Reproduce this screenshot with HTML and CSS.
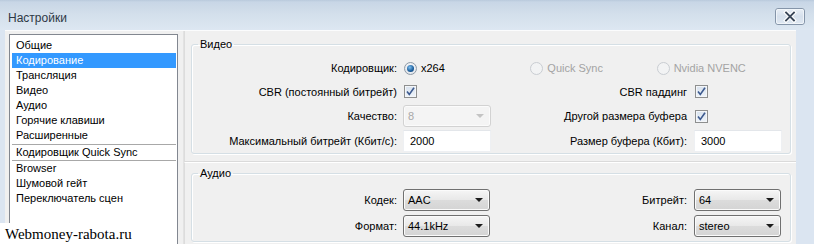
FILE: index.html
```html
<!DOCTYPE html>
<html lang="ru">
<head>
<meta charset="utf-8">
<title>Настройки</title>
<link rel="stylesheet" href="styles.css">
</head>
<body>
<div class="window">
  <div class="titlebar">
    <span class="title">Настройки</span>
    <span class="close-btn">
      <svg width="30" height="17" viewBox="0 0 30 17">
        <defs>
          <linearGradient id="cbg" x1="0" y1="0" x2="0" y2="1">
            <stop offset="0" stop-color="#e9eff6"/>
            <stop offset="0.5" stop-color="#d6e0ec"/>
            <stop offset="1" stop-color="#dfe8f2"/>
          </linearGradient>
        </defs>
        <rect x="0.5" y="0.5" width="29" height="16" rx="2.5" fill="url(#cbg)" stroke="#8595a9"/>
        <rect x="1.5" y="1.5" width="27" height="14" rx="1.5" fill="none" stroke="#f4f7fb" stroke-opacity="0.8"/>
        <path d="M11 4.5 L19 12.5 M19 4.5 L11 12.5" stroke="#ffffff" stroke-width="4" stroke-linecap="square"/>
        <path d="M11 4.5 L19 12.5 M19 4.5 L11 12.5" stroke="#3a4759" stroke-width="1.8" stroke-linecap="square"/>
      </svg>
    </span>
  </div>
  <div class="body">
    <ul class="listbox">
      <li class="item">Общие</li>
      <li class="item selected">Кодирование</li>
      <li class="item">Трансляция</li>
      <li class="item">Видео</li>
      <li class="item">Аудио</li>
      <li class="item">Горячие клавиши</li>
      <li class="item">Расширенные</li>
      <li class="item separated">Кодировщик Quick Sync</li>
      <li class="item">Browser</li>
      <li class="item">Шумовой гейт</li>
      <li class="item">Переключатель сцен</li>
    </ul>
    <div class="content">
      <div class="panel panel-video">
        <fieldset class="group">
          <legend class="group-title">Видео</legend>
          <div class="grid grid-video">
            <span class="label">Кодировщик:</span>
            <div class="radios">
              <span class="radio-item"><span class="radio checked"></span><span>x264</span></span>
              <span class="radio-item disabled"><span class="radio"></span><span>Quick Sync</span></span>
              <span class="radio-item disabled"><span class="radio"></span><span>Nvidia NVENC</span></span>
            </div>

            <span class="label">CBR (постоянный битрейт)</span>
            <span class="cell"><span class="checkbox"><svg width="11" height="11" viewBox="0 0 11 11"><path d="M2 5.5 L4.3 8.5 L9 1.8" fill="none" stroke="#3d5a8f" stroke-width="1.6"/></svg></span></span>
            <span class="label label-right">CBR паддинг</span>
            <span class="cell"><span class="checkbox"><svg width="11" height="11" viewBox="0 0 11 11"><path d="M2 5.5 L4.3 8.5 L9 1.8" fill="none" stroke="#3d5a8f" stroke-width="1.6"/></svg></span></span>

            <span class="label">Качество:</span>
            <span class="combo disabled"><span class="combo-text">8</span><span class="arrow"></span></span>
            <span class="label label-right">Другой размера буфера</span>
            <span class="cell"><span class="checkbox"><svg width="11" height="11" viewBox="0 0 11 11"><path d="M2 5.5 L4.3 8.5 L9 1.8" fill="none" stroke="#3d5a8f" stroke-width="1.6"/></svg></span></span>

            <span class="label">Максимальный битрейт (Кбит/с):</span>
            <span class="input">2000</span>
            <span class="label label-right">Размер буфера (Кбит):</span>
            <span class="input">3000</span>
          </div>
        </fieldset>
      </div>
      <div class="panel panel-audio">
        <fieldset class="group">
          <legend class="group-title">Аудио</legend>
          <div class="grid grid-audio">
            <span class="label">Кодек:</span>
            <span class="combo"><span class="combo-text">AAC</span><span class="arrow"></span></span>
            <span class="label label-right">Битрейт:</span>
            <span class="combo"><span class="combo-text">64</span><span class="arrow"></span></span>

            <span class="label">Формат:</span>
            <span class="combo"><span class="combo-text">44.1kHz</span><span class="arrow"></span></span>
            <span class="label label-right">Канал:</span>
            <span class="combo"><span class="combo-text">stereo</span><span class="arrow"></span></span>
          </div>
        </fieldset>
      </div>
    </div>
  </div>
  <div class="watermark">Webmoney-rabota.ru</div>
</div>
</body>
</html>
```

FILE: styles.css
```css
* { box-sizing: border-box; }
html, body { margin: 0; padding: 0; }
body {
  width: 814px;
  height: 244px;
  overflow: hidden;
  font-family: "Liberation Sans", Arial, sans-serif;
  font-size: 11px;
  color: #000;
  background: #dce6f2;
}
.window {
  position: relative;
  width: 814px;
  height: 244px;
  background: #dbe5f1;
  overflow: hidden;
}
.titlebar {
  height: 30px;
  display: flex;
  align-items: center;
  padding-left: 8px;
  padding-right: 9px;
  background: linear-gradient(#b9c9dc 0px, #c8d6e6 2px, #d3dfeb 14px, #dde7f2 30px);
}
.title {
  font-size: 12px;
  color: #2e3845;
  margin-top: 5px;
}
.close-btn {
  margin-left: auto;
  display: flex;
  margin-top: 3px;
}
.body {
  display: flex;
  height: 214px;
  margin-left: 5px;
  width: 791px;
  background: #f0f0f0;
  border-top: 1px solid #fbfcfd;
}
.listbox {
  list-style: none;
  margin: 3px 0 0 4px;
  padding: 3px 1px 0 2px;
  width: 170px;
  background: #fff;
  border: 1px solid #828790;
  border-bottom: none;
}
.item {
  height: 15px;
  line-height: 15px;
  padding-left: 4px;
  white-space: nowrap;
}
.item.selected {
  background: #3399ff;
  color: #fff;
}
.item.separated {
  border-top: 1px solid #a8a8a8;
  border-bottom: 1px solid #a8a8a8;
  height: 17px;
  line-height: 15px;
  margin-top: 1px;
}
.content {
  flex: 1;
  margin-left: 5px;
  display: flex;
  flex-direction: column;
  border-left: 1px solid #e2e2e2;
}
.panel {
  padding: 0 5px 0 6px;
  border-left: 1px solid #dcdcdc;
}
.panel-video {
  height: 131px;
  padding-top: 6px;
  border-bottom: 1px solid #dadada;
}
.panel-audio {
  flex: 1;
  padding-top: 3px;
  border-top: 1px solid #fff;
}
.group {
  margin: 0;
  padding: 0 8px 0 0;
  border: 1px solid #d5dfe5;
  border-radius: 3px;
  box-shadow: inset 1px 1px 0 #fff, 1px 1px 0 #fff;
  min-width: 0;
}
.group-title {
  margin-left: 6px;
  padding: 0 2px;
  font-size: 11px;
  line-height: 14px;
}
.grid {
  display: grid;
  grid-template-columns: 211px 88px 203px 88px;
  align-items: center;
}
.grid-video {
  margin-top: 7px;
  grid-template-rows: 20px 21px 22px 22px;
  row-gap: 3px;
  padding-bottom: 1px;
}
.grid-audio {
  margin-top: 9px;
  grid-template-rows: 22px 22px;
  row-gap: 4px;
  padding-bottom: 4px;
}
.label {
  text-align: right;
  padding-right: 6px;
  white-space: nowrap;
}
.label-right { padding-right: 7px; }
.cell {
  display: flex;
  align-items: center;
  padding-left: 1px;
}
.radios {
  grid-column: 2 / 5;
  display: flex;
  align-items: center;
}
.radio-item {
  width: 127px;
  display: flex;
  align-items: center;
  gap: 4px;
  padding-left: 1px;
}
.radio-item.disabled { color: #a3a3a3; }
.radio {
  width: 13px;
  height: 13px;
  border-radius: 50%;
  border: 1px solid #8e9aa6;
  background: radial-gradient(circle at 50% 40%, #ffffff, #e0e4ea 80%);
  display: inline-flex;
  align-items: center;
  justify-content: center;
}
.radio.checked::after {
  content: "";
  width: 7px;
  height: 7px;
  border-radius: 50%;
  background: radial-gradient(circle at 40% 35%, #7fc0f0, #1a5c9a 60%, #0d3c6e);
}
.radio-item.disabled .radio {
  border-color: #c9cdd2;
  background: #f2f3f4;
}
.checkbox {
  width: 13px;
  height: 13px;
  border: 1px solid #8e8f8f;
  background: linear-gradient(#d8e2ee, #eef3f9);
  display: inline-flex;
  align-items: center;
  justify-content: center;
  box-shadow: inset 0 0 0 1px #f4f6f9;
}
.checkbox svg { display: block; }
.combo {
  height: 22px;
  display: flex;
  align-items: center;
  justify-content: space-between;
  padding: 0 6px 0 4px;
  border: 1px solid #707070;
  border-radius: 3px;
  background: linear-gradient(#f6f6f6, #e8e8e8 50%, #dcdcdc 51%, #d4d4d4);
  box-shadow: inset 0 0 0 1px #fbfbfb;
}
.combo.disabled {
  border-color: #d2d2d2;
  background: #f4f4f4;
  color: #a8a8a8;
}
.arrow {
  width: 0;
  height: 0;
  border-left: 4px solid transparent;
  border-right: 4px solid transparent;
  border-top: 4px solid #1c1c1c;
}
.combo.disabled .arrow { border-top-color: #c4c4c4; }
.grid-audio .combo { height: 22px; width: 87px; }
.input {
  height: 22px;
  display: flex;
  align-items: center;
  padding-left: 6px;
  background: #fff;
  border: 1px solid #eef0f3;
  border-top-color: #e3e6ea;
}
.watermark {
  position: absolute;
  left: 0;
  bottom: 0;
  height: 21px;
  padding: 2px 5px 0 5px;
  background: #fff;
  font-family: "Liberation Serif", "Times New Roman", serif;
  font-size: 15px;
  color: #000;
  line-height: 18px;
}
```
